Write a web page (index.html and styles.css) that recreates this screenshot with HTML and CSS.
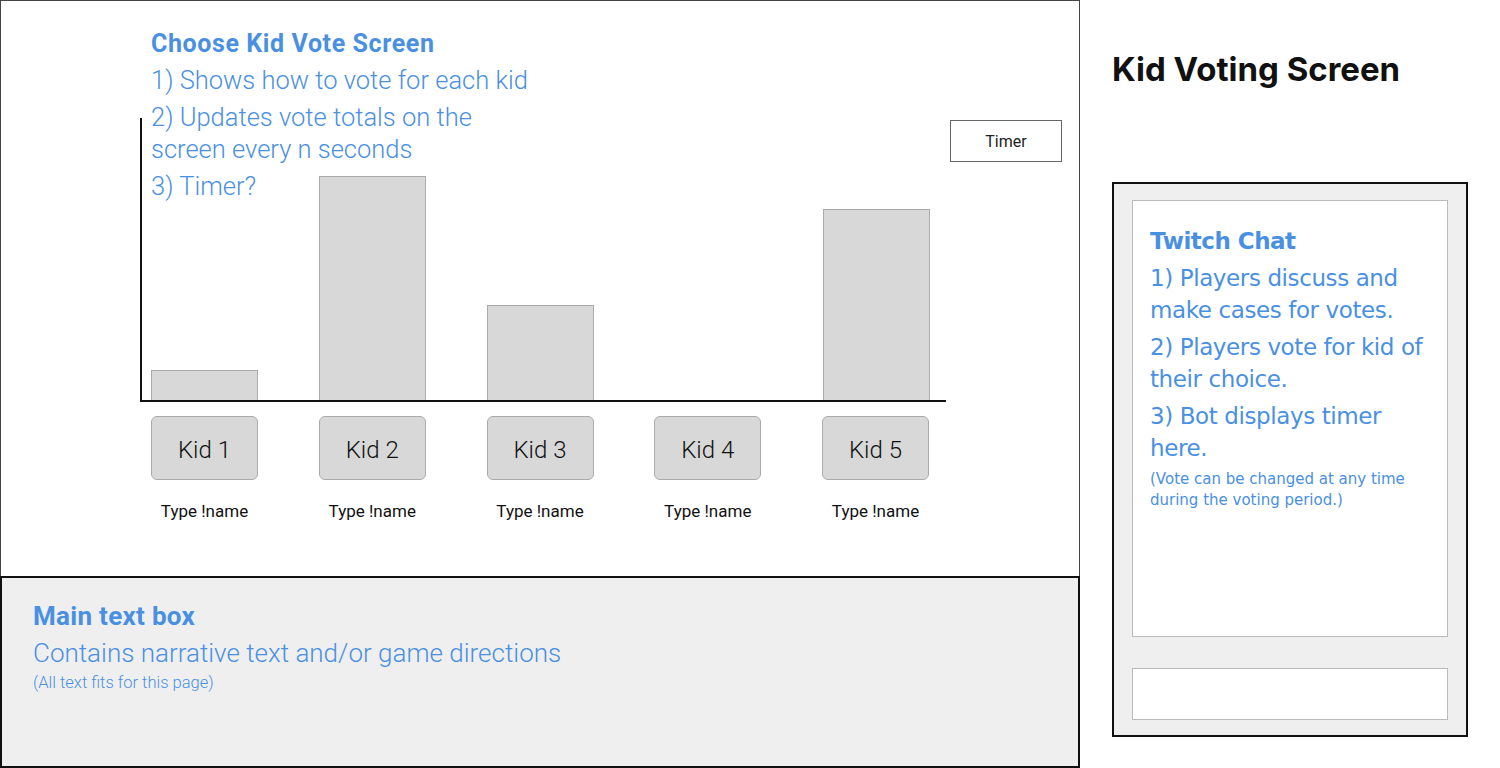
FILE: index.html
```html
<!DOCTYPE html>
<html lang="en">
  <head>
    <meta charset="UTF-8" />
    <meta name="viewport" content="width=device-width, initial-scale=1.0" />
    <link rel="stylesheet" href="styles.css">
    <title>Kid Voting Screen</title>
  </head>
  <body>
    <div class="page">
      <div class="main">
        <div class="vote-screen">
          <!-- Notes over the chart -->
          <div class="notes">
            <h2>Choose Kid Vote Screen</h2>
            <p>1) Shows how to vote for each kid</p>
            <p>2) Updates vote totals on the<br />screen every n seconds</p>
            <p>3) Timer?</p>
          </div>
          <div class="chart-row">
            <div class="chart">
              <div class="bar-slot"><div class="bar" style="height: 30px"></div></div>
              <div class="bar-slot"><div class="bar" style="height: 224px"></div></div>
              <div class="bar-slot"><div class="bar" style="height: 95px"></div></div>
              <div class="bar-slot"></div>
              <div class="bar-slot"><div class="bar" style="height: 191px"></div></div>
            </div>
            <div class="timer">Timer</div>
          </div>
          <div class="kids">
            <div class="kid">
              <div class="kid-btn">Kid 1</div>
              <span class="hint">Type !name</span>
            </div>
            <div class="kid">
              <div class="kid-btn">Kid 2</div>
              <span class="hint">Type !name</span>
            </div>
            <div class="kid">
              <div class="kid-btn">Kid 3</div>
              <span class="hint">Type !name</span>
            </div>
            <div class="kid">
              <div class="kid-btn">Kid 4</div>
              <span class="hint">Type !name</span>
            </div>
            <div class="kid">
              <div class="kid-btn">Kid 5</div>
              <span class="hint">Type !name</span>
            </div>
          </div>
        </div>
        <div class="text-box">
          <h2>Main text box</h2>
          <p>Contains narrative text and/or game directions</p>
          <small>(All text fits for this page)</small>
        </div>
      </div>
      <div class="side">
        <h1>Kid Voting Screen</h1>
        <div class="chat">
          <div class="chat-log">
            <h2>Twitch Chat</h2>
            <p>1) Players discuss and make cases for votes.</p>
            <p>2) Players vote for kid of their choice.</p>
            <p>3) Bot displays timer here.</p>
            <small>(Vote can be changed at any time during the voting period.)</small>
          </div>
          <div class="chat-input"></div>
        </div>
      </div>
    </div>
  </body>
</html>
```

FILE: styles.css
```css
* {
  box-sizing: border-box;
}
body {
  margin: 0;
  background-color: #fff;
  font-family: Roboto, "Liberation Sans", sans-serif;
  color: #111;
}
h1,
h2,
p {
  margin: 0;
}
.page {
  display: flex;
  width: 1500px;
  height: 768px;
}
.main {
  display: flex;
  flex-direction: column;
  width: 1080px;
}
.vote-screen {
  position: relative;
  height: 576px;
  border: 1px solid #444;
  border-bottom: 0;
  padding: 117px 0 0 139px;
}
.notes {
  position: absolute;
  top: 28px;
  left: 150px;
  color: #4a90e2;
}
.notes h2 {
  font-size: 25px;
  font-weight: 700;
  letter-spacing: 0.6px;
  line-height: 30px;
  margin-bottom: 5px;
}
.notes p {
  font-size: 25.5px;
  font-weight: 300;
  line-height: 32px;
  margin-bottom: 5px;
}
.chart-row {
  display: flex;
  align-items: flex-start;
}
.chart {
  display: flex;
  align-items: flex-end;
  gap: 61px;
  width: 806px;
  height: 284px;
  padding-left: 9px;
  border-left: 2px solid #111;
  border-bottom: 2px solid #111;
}
.bar-slot {
  width: 107px;
}
.bar {
  background-color: #d8d8d8;
  border: 1px solid #aaa;
  border-bottom: 0;
}
.timer {
  width: 112px;
  height: 42px;
  margin: 2px 0 0 4px;
  border: 1px solid #666;
  display: flex;
  align-items: center;
  justify-content: center;
  font-size: 16px;
  color: #222;
}
.kids {
  display: flex;
  gap: 60.75px;
  margin: 14px 0 0 11px;
}
.kid {
  display: flex;
  flex-direction: column;
  align-items: center;
  width: 107px;
}
.kid-btn {
  width: 107px;
  height: 64px;
  padding-top: 4px;
  display: flex;
  align-items: center;
  justify-content: center;
  background-color: #d8d8d8;
  border: 1px solid #aaa;
  border-radius: 6px;
  font-size: 24px;
  font-weight: 300;
  color: #111;
}
.hint {
  margin-top: 21px;
  font-size: 17px;
  color: #111;
}
.text-box {
  height: 192px;
  background-color: #efefef;
  border: 2px solid #111;
  padding: 23px 31px;
  color: #4a90e2;
}
.text-box h2 {
  font-size: 26px;
  font-weight: 700;
  letter-spacing: 0.3px;
  line-height: 30px;
  margin-bottom: 6px;
}
.text-box p {
  font-size: 26px;
  font-weight: 300;
  line-height: 32px;
}
.text-box small {
  display: block;
  margin-top: 4px;
  font-size: 16.5px;
  font-weight: 300;
  line-height: 20px;
}
.side {
  flex: 1;
  padding: 50px 0 0 32px;
}
.side h1 {
  font-family: Inter, sans-serif;
  font-size: 33px;
  font-weight: 700;
  line-height: 38px;
}
.chat {
  display: flex;
  flex-direction: column;
  gap: 31px;
  width: 356px;
  height: 555px;
  margin-top: 94px;
  background-color: #efefef;
  border: 2px solid #111;
  padding: 16px 18px 15px;
  font-family: "DejaVu Sans", sans-serif;
}
.chat-log {
  flex-shrink: 0;
  height: 437px;
  background-color: #fff;
  border: 1px solid #bbb;
  padding: 25px 17px;
  color: #4a90e2;
}
.chat-log h2 {
  font-size: 23px;
  font-weight: 700;
  letter-spacing: -0.5px;
  line-height: 30px;
  margin-bottom: 6px;
}
.chat-log p {
  font-size: 23px;
  letter-spacing: -0.4px;
  line-height: 32px;
  margin-bottom: 5px;
}
.chat-log small {
  display: block;
  font-size: 15px;
  line-height: 21px;
}
.chat-input {
  flex-shrink: 0;
  height: 52px;
  background-color: #fff;
  border: 1px solid #bbb;
}
```
